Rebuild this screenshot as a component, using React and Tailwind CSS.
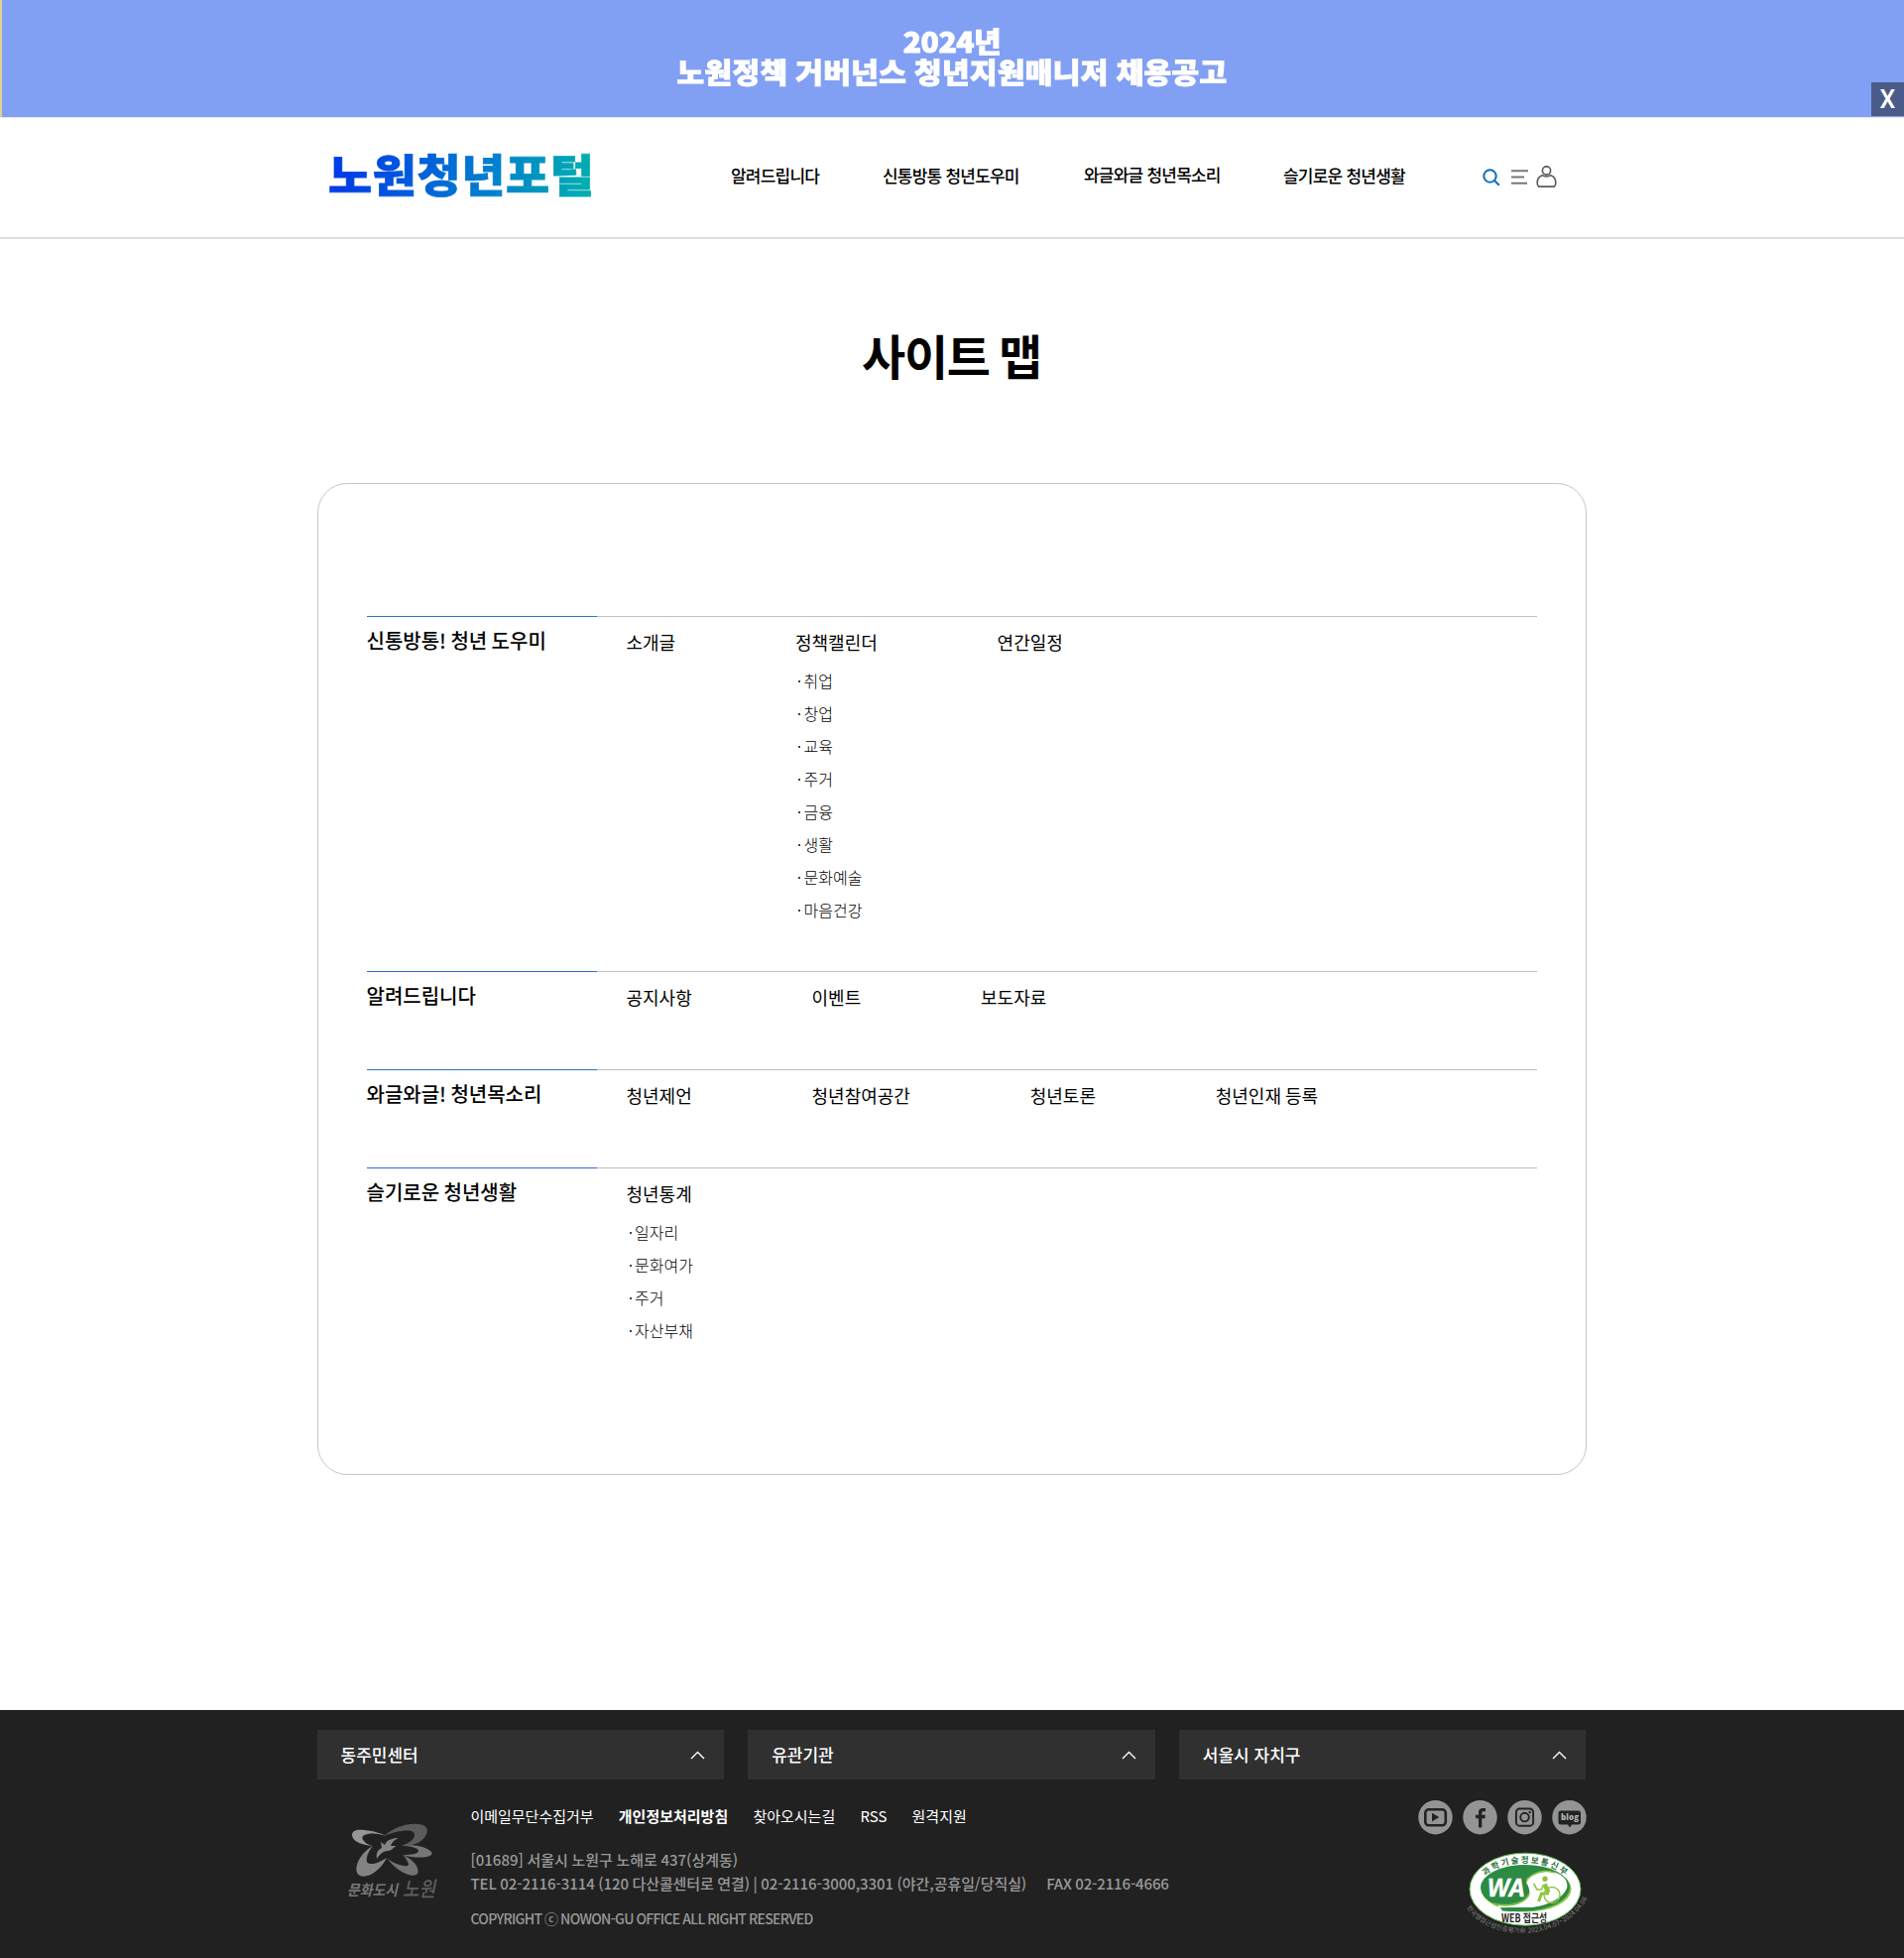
import React from "react";

const sections = [
  {
    title: "신통방통! 청년 도우미",
    height: "h-[358px]",
    items: [
      { name: "소개글" },
      { name: "정책캘린더", subs: ["취업", "창업", "교육", "주거", "금융", "생활", "문화예술", "마음건강"] },
      { name: "연간일정" },
    ],
  },
  {
    title: "알려드립니다",
    height: "h-[99px]",
    items: [{ name: "공지사항" }, { name: "이벤트" }, { name: "보도자료" }],
  },
  {
    title: "와글와글! 청년목소리",
    height: "h-[99px]",
    items: [{ name: "청년제언" }, { name: "청년참여공간" }, { name: "청년토론" }, { name: "청년인재 등록" }],
  },
  {
    title: "슬기로운 청년생활",
    height: "h-[200px]",
    items: [{ name: "청년통계", subs: ["일자리", "문화여가", "주거", "자산부채"] }],
  },
];

function Banner() {
  return (
    <div className="relative flex h-[119px] flex-col items-center border-b border-[#e3e9fb] bg-[#82a0f3] pt-[26px] font-black text-white">
      <span className="absolute left-0 top-0 h-[118px] w-[2px] bg-[#e2cf94]" />
      <p className="h-[31px] scale-x-[1.07] text-[28px] leading-[31px] tracking-[-0.4px] [-webkit-text-stroke:1px_white]">2024년</p>
      <p className="h-[31px] scale-y-[0.93] whitespace-nowrap text-[30px] leading-[31px] tracking-[0.35px] [word-spacing:-0.8px] [-webkit-text-stroke:1px_white]">
        노원정책 거버넌스 청년지원매니저 채용공고
      </p>
      <button className="absolute bottom-[1px] right-0 flex h-[34px] w-[33px] items-center justify-center bg-[#4a5b89] font-[Roboto] text-[25px] font-medium leading-none">
        X
      </button>
    </div>
  );
}

function Header() {
  return (
    <header className="h-[122px] border-b-2 border-[#dfdfdf]">
      <div className="mx-auto flex h-full w-[1280px] items-center">
        <h1 className="mb-[11px] ml-[11px] w-[406px] scale-y-[0.94] whitespace-nowrap bg-[linear-gradient(100deg,#003ce8_5%,#0082cc_42%,#00abb2_63%)] bg-clip-text text-[48px] font-black leading-[70px] tracking-[0.6px] text-transparent [-webkit-text-stroke:0.8px_transparent]">
          노원청년포털
        </h1>
        <nav className="mb-[4px] flex text-[17px] font-medium leading-6 tracking-[-0.78px] text-black">
          <a className="w-[153px] whitespace-nowrap">알려드립니다</a>
          <a className="w-[203px] whitespace-nowrap">신통방통 청년도우미</a>
          <a className="-mt-px w-[201px] whitespace-nowrap">와글와글 청년목소리</a>
          <a className="w-[201px] whitespace-nowrap">슬기로운 청년생활</a>
        </nav>
        <div className="mb-[2px] flex items-center">
          <svg className="mt-[2px]" width="18" height="18" viewBox="0 0 18 18" fill="none" stroke="#0a6ebd" strokeWidth="2">
            <circle cx="7.5" cy="7.5" r="6.2" />
            <path d="M12 12l4.8 4.8" />
          </svg>
          <svg className="ml-[10px]" width="18" height="15" viewBox="0 0 18 15" fill="none" stroke="#777" strokeWidth="2">
            <path d="M1 1.2h17M1 7.5h13M1 13.8h16" />
          </svg>
          <svg className="ml-[8px]" width="21" height="22" viewBox="0 0 21 22" fill="none" stroke="#5a5a5a" strokeWidth="1.6">
            <circle cx="10.5" cy="5" r="4.1" />
            <path d="M6.3 9.7C3 10.800 1.200 13.700 1.200 17.500c0 1.800.5 3 1.500 3.600h15.600c1-.6 1.500-1.800 1.500-3.600 0-3.800-1.800-6.700-5.100-7.800-2.300 1.600-6.100 1.600-8.400 0z" />
          </svg>
        </div>
      </div>
    </header>
  );
}

function Section({ title, height, items }) {
  return (
    <section className={`${height} flex`}>
      <div className="w-[232px] border-t border-[#2b71d0]">
        <h3 className="mt-[9px] whitespace-nowrap text-[20px] font-medium leading-[30px] text-black [word-spacing:-1.2px]">{title}</h3>
      </div>
      <ul className="flex flex-1 gap-[120.800px] border-t border-[#bfbfbf] pl-[30px]">
        {items.map((item) => (
          <li key={item.name} className="whitespace-nowrap pt-[12px]">
            <a className="block text-[18px] leading-[26px] text-black [word-spacing:-1px]">{item.name}</a>
            {item.subs && (
              <ul className="mt-[10px] text-[16px] font-light text-black">
                {item.subs.map((s) => (
                  <li key={s} className="flex h-[33px] items-center leading-[33px]">
                    <span className="ml-[3px] mr-[3.500px] size-[2px] bg-[#444]" />
                    {s}
                  </li>
                ))}
              </ul>
            )}
          </li>
        ))}
      </ul>
    </section>
  );
}

function NowonLogo() {
  return (
    <svg className="block overflow-visible" width="92" height="82" viewBox="350 1836 92 82">
      <g fillRule="evenodd">
        <path fill="#979797" d="M376 1861C362 1860 355 1855 355 1850C355 1845 361 1844 367 1845C378 1846 386 1849 389 1851C384 1849 377 1848 371 1849C365 1850 364 1853 367 1856C369 1859 372 1860 376 1861Z" />
        <path fill="#5b5b5b" d="M387 1851C397 1843 409 1838 422 1839C431 1840 433 1845 429 1851C425 1858 416 1861 405 1861C413 1858 418 1854 418 1850C418 1843 402 1845 387 1851Z" />
        <path fill="#777" d="M405 1861C417 1859 430 1862 435 1867C439 1872 423 1875 406 1870C415 1870 422 1869 422 1866C422 1863 414 1861 405 1861Z" />
        <path fill="#737373" d="M390 1873C396 1878 401 1880 407 1881C412 1882 413 1880 411 1877C410 1874 408 1872 406 1870C416 1874 424 1883 421 1889C417 1894 401 1888 390 1873Z" />
        <path fill="#838383" d="M376 1861C371 1867 369 1873 370 1877C372 1881 381 1879 390 1873C383 1887 370 1894 363 1891C355 1887 361 1869 376 1861Z" />
        <path fill="#858585" d="M380 1874C379 1868 381 1865 385 1863L384 1857L388 1860C390 1855 395 1853 402 1853C397 1855 395 1858 394 1861L400 1861C396 1862 396 1866 391 1866C387 1866 383 1869 380 1874Z" />
      </g>
      <text x="350" y="1911" fill="#777" fontSize="15" fontStyle="italic" fontWeight="700" textLength="51" lengthAdjust="spacingAndGlyphs">문화도시</text>
      <text x="406" y="1912" fill="#5e5e5e" fontSize="21" fontStyle="italic" fontWeight="500" textLength="33" lengthAdjust="spacingAndGlyphs">노원</text>
    </svg>
  );
}

function WaMark() {
  return (
    <svg className="block overflow-visible" width="124" height="84" viewBox="0 0 124 84">
      <defs>
        <path id="wa-top" d="M20 26C38 7.500 84 7.500 102 26" />
        <path id="wa-bottom" d="M2 57C24 92 98 93 123 49" />
      </defs>
      <ellipse cx="61" cy="38.700" rx="56" ry="36.500" fill="#fff" stroke="#58ad46" strokeWidth="1" />
      <ellipse cx="62" cy="38.500" rx="45.500" ry="23" fill="#86c540" />
      <ellipse cx="61" cy="37" rx="45" ry="23" fill="#2c8a43" />
      <path fill="#fff" d="M62 32C66 24 77 20 88 21C99 23 105 30 103 38C100 50 84 57 66 57H34V55C50 57 61 52 65 45C66 42 65 36 62 32Z" />
      <path fill="#2c8a43" d="M36 57C62 61 95 55 103 38C104 54 75 64 38 60.500Z" />
      <path fill="none" stroke="#86c540" strokeWidth="1.500" d="M28 53C43 57 62 53 65 43M62 30C68 22 80 18 91 22" />
      <text x="23" y="46" fill="#fff" fontFamily="Liberation Sans" fontSize="26" fontWeight="700" fontStyle="italic" textLength="38" lengthAdjust="spacingAndGlyphs" stroke="#fff" strokeWidth=".6">WA</text>
      <g fill="none" stroke="#8dc63f" strokeLinejoin="round">
        <circle cx="81" cy="28.300" r="2.700" fill="#8dc63f" stroke="none" />
        <path strokeWidth="4.500" d="M80.500 33.500l4 8.500" />
        <path strokeWidth="3" d="M85 43h-7.500l-3 8" />
        <path strokeWidth="1.500" d="M79.500 34l-2 5h-5M73 39l-3.500-6" />
        <circle cx="88" cy="44.500" r="8" strokeWidth="1.400" />
      </g>
      <text fill="#27713a" fontSize="8.500" fontWeight="700">
        <textPath href="#wa-top" startOffset="1" textLength="86">과학기술정보통신부</textPath>
      </text>
      <text x="37" y="71.500" fill="#252525" fontSize="11" fontWeight="700" textLength="46" lengthAdjust="spacingAndGlyphs">WEB 접근성</text>
      <text fill="#858585" fontSize="6.500">
        <textPath href="#wa-bottom" textLength="142">한국웹접근성인증평가원 2023.04.07~2024.04.06</textPath>
      </text>
    </svg>
  );
}

function Socials() {
  return (
    <div className="flex gap-[10px]">
      <svg width="35" height="35" viewBox="0 0 35 35">
        <circle cx="17.500" cy="17.200" r="17.200" fill="#949494" />
        <rect x="7.300" y="9.300" width="20.500" height="16" rx="3.500" fill="none" stroke="#222" strokeWidth="2.600" />
        <path d="M14 12.800v8.600l7.200-4.300z" fill="#222" />
      </svg>
      <svg width="35" height="35" viewBox="0 0 35 35">
        <circle cx="17.500" cy="17.200" r="17.200" fill="#949494" />
        <path d="M16 27.500V18.200h-3v-3.400h3v-2.600C16 9 18 8 20.500 8H23v3.300h-1.800c-1.500 0-1.900.6-1.900 1.700v1.800h3.600l-.5 3.400h-3.100v9.300z" fill="#222" />
      </svg>
      <svg width="35" height="35" viewBox="0 0 35 35" fill="none" stroke="#222">
        <circle cx="17.500" cy="17.200" r="17.200" fill="#949494" stroke="none" />
        <rect x="8.900" y="8.500" width="17.200" height="17.200" rx="3.500" strokeWidth="1.900" />
        <circle cx="17.500" cy="17.100" r="4.300" strokeWidth="1.900" />
        <circle cx="22.700" cy="12" r="1.200" fill="#222" stroke="none" />
      </svg>
      <svg width="35" height="35" viewBox="0 0 35 35">
        <circle cx="17.500" cy="17.200" r="17.200" fill="#949494" />
        <path d="M9 10.500h17.500q2.500 0 2.500 2.500v9q0 2.500-2.500 2.500H20L18 27.500l-2-3H9q-2.500 0-2.500-2.500v-9q0-2.500 2.500-2.500z" fill="#222" />
        <text x="9" y="19.500" fontFamily="Open Sans" fontSize="8" fontWeight="800" fill="#b0b0b0" textLength="18">blog</text>
      </svg>
    </div>
  );
}

function Footer() {
  return (
    <footer className="h-[250px] bg-[#212121] pr-px pt-[20px]">
      <div className="mx-auto w-[1280px]">
        <div className="grid grid-cols-3 gap-[24px]">
          {["동주민센터", "유관기관", "서울시 자치구"].map((t) => (
            <button key={t} className="flex h-[50px] items-center justify-between bg-[#303030] pl-[24px] pr-[19px] text-[17px] font-medium text-white">
              {t}
              <svg width="15" height="9" viewBox="0 0 15 9" fill="none" stroke="#fff" strokeWidth="1.400">
                <path d="M1 8l6.500-6.500L14 8" />
              </svg>
            </button>
          ))}
        </div>
        <div className="flex">
          <div className="ml-[30px] mt-[42px] w-[125px]">
            <NowonLogo />
          </div>
          <div className="w-[956px] whitespace-nowrap pt-[26px] text-[#999]">
            <ul className="flex gap-[25.200px] text-[15px] leading-[22px] text-white">
              <li>이메일무단수집거부</li>
              <li className="font-bold">개인정보처리방침</li>
              <li>찾아오시는길</li>
              <li>RSS</li>
              <li>원격지원</li>
            </ul>
            <address className="mt-[21px] text-[15px] font-medium not-italic leading-[24px] [word-spacing:-0.6px]">
              <p>[01689] 서울시 노원구 노해로 437(상계동)</p>
              <p className="flex gap-[20px]">
                <span className="tracking-[-0.07px]">TEL 02-2116-3114 (120 다산콜센터로 연결) | 02-2116-3000,3301 (야간,공휴일/당직실)</span>
                <span className="tracking-[-0.15px]">FAX 02-2116-4666</span>
              </p>
            </address>
            <p className="mt-[13px] text-[14px] font-medium leading-[20px] tracking-[-0.680px] [word-spacing:-0.5px]">COPYRIGHT ⓒ NOWON-GU OFFICE ALL RIGHT RESERVED</p>
          </div>
          <div className="-mr-[1px] flex shrink-0 flex-col items-end pt-[21px]">
            <div className="mr-[1px]">
              <Socials />
            </div>
            <div className="mt-[16px]">
              <WaMark />
            </div>
          </div>
        </div>
      </div>
    </footer>
  );
}

export default function App() {
  return (
    <div className="h-[1974px] w-[1920px] overflow-hidden bg-white font-['Noto_Sans_CJK_KR',sans-serif]" lang="ko">
      <Banner />
      <Header />
      <main className="h-[1483px] pr-px">
        <h2 className="pt-[81px] text-center text-[48px] font-bold leading-[70px] tracking-[-1.200px] text-black [word-spacing:-3px]">사이트 맵</h2>
        <div className="mx-auto mt-[95px] h-[1000px] w-[1280px] rounded-[30px] border border-[#c6c6c6] px-[49px] pt-[133px]">
          {sections.map((s) => (
            <Section key={s.title} {...s} />
          ))}
        </div>
      </main>
      <Footer />
    </div>
  );
}
